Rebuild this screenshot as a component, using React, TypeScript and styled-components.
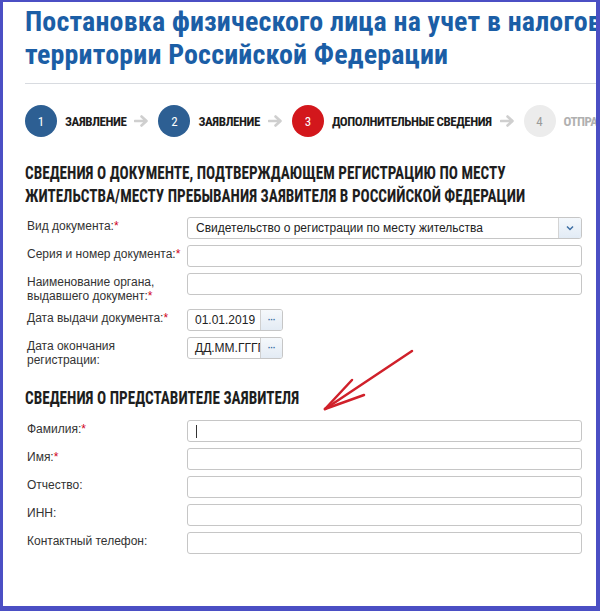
import styled, { createGlobalStyle } from "styled-components";

const GlobalStyle = createGlobalStyle`
  html, body {
    margin: 0;
    padding: 0;
    background: #ffffff;
  }
`;

const condensed = `"Roboto Condensed", "DejaVu Sans Condensed", sans-serif`;
const sans = `"Liberation Sans", Arial, sans-serif`;

const Frame = styled.div`
  position: relative;
  width: 600px;
  height: 611px;
  box-sizing: border-box;
  border-style: solid;
  border-color: #4b4fc4;
  border-width: 2px 4px 5px 3px;
  overflow: hidden;
  background: #fff;
`;

const Content = styled.div`
  width: 620px;
  padding: 3px 0 0 22px;
`;

const Title = styled.h1`
  margin: 0;
  font-family: ${condensed};
  font-weight: bold;
  font-size: 28px;
  line-height: 33px;
  letter-spacing: 0.15px;
  color: #1b5ea6;
  white-space: nowrap;
`;

const Divider = styled.div`
  height: 1px;
  background: #d8dbe0;
  margin-top: 12px;
`;

const Steps = styled.div`
  display: flex;
  align-items: center;
  height: 32px;
  margin-top: 21px;
  white-space: nowrap;
`;

const Step = styled.div`
  display: flex;
  align-items: center;
  gap: 8px;
`;

const Circle = styled.div<{ $kind: "done" | "active" | "next" }>`
  width: 32px;
  height: 32px;
  border-radius: 50%;
  display: flex;
  align-items: center;
  justify-content: center;
  font-family: ${condensed};
  font-size: 13px;
  color: ${(p) => (p.$kind === "next" ? "#9a9a9a" : "#fff")};
  background: ${(p) =>
    p.$kind === "done" ? "#2d5f93" : p.$kind === "active" ? "#d3171c" : "#ececec"};
`;

const StepLabel = styled.span<{ $muted?: boolean }>`
  font-family: ${condensed};
  font-weight: bold;
  font-size: 13px;
  letter-spacing: -0.45px;
  color: ${(p) => (p.$muted ? "#b0b0b0" : "#1c1c1c")};
`;

const StepArrow = styled.svg`
  margin: 0 9px 0 8px;
`;

const SectionTitle = styled.h2<{ $top: number }>`
  margin: ${(p) => p.$top}px 0 0 0;
  font-family: ${condensed};
  font-weight: bold;
  font-size: 19px;
  line-height: 23px;
  color: #1e1e1e;
  text-transform: uppercase;
  white-space: nowrap;
  transform: scaleX(0.8);
  transform-origin: left top;
`;

const Form = styled.div<{ $top: number }>`
  margin-top: ${(p) => p.$top}px;
  width: 557px;
  display: flex;
  flex-direction: column;
  gap: 6px;
`;

const Row = styled.div`
  display: grid;
  grid-template-columns: 162px 395px;
  align-items: start;
`;

const Label = styled.div`
  padding: 3px 0 0 2px;
  font-family: ${sans};
  font-size: 12px;
  line-height: 13.5px;
  color: #333;
`;

const Req = styled.span`
  color: #d0021b;
`;

const Input = styled.div`
  box-sizing: border-box;
  height: 22px;
  border: 1px solid #c6c6c6;
  border-radius: 3px;
  background: #fff;
  display: flex;
  align-items: center;
  padding-left: 8px;
  font-family: ${sans};
  font-size: 12px;
  color: #222;
`;

const Caret = styled.span`
  width: 1px;
  height: 13px;
  background: #333;
`;

const Select = styled(Input)`
  padding-right: 0;
  justify-content: space-between;
  overflow: hidden;
`;

const SelectBtn = styled.div`
  width: 22px;
  align-self: stretch;
  border-left: 1px solid #d4d4d4;
  background: linear-gradient(#f4f8fc, #e2ebf5);
  display: flex;
  align-items: center;
  justify-content: center;
`;

const DateBox = styled.div`
  display: flex;
  width: 96px;
  height: 22px;
  box-sizing: border-box;
  border: 1px solid #c6c6c6;
  border-radius: 3px;
  overflow: hidden;
`;

const DateText = styled.div`
  flex: 1;
  display: flex;
  align-items: center;
  padding-left: 7px;
  font-family: ${sans};
  font-size: 12px;
  color: #222;
  white-space: nowrap;
  overflow: hidden;
`;

const DateBtn = styled.div`
  width: 21px;
  border-left: 1px solid #d0d0d0;
  background: linear-gradient(#f5f8fb, #e3ebf4);
  color: #3a6ea5;
  font-family: ${sans};
  font-size: 9px;
  font-weight: bold;
  display: flex;
  align-items: center;
  justify-content: center;
  letter-spacing: -0.5px;
`;

const Annotation = styled.svg`
  position: absolute;
  left: -3px;
  top: -2px;
  pointer-events: none;
`;

function Arrow() {
  return (
    <StepArrow width="15" height="12" viewBox="0 0 15 12">
      <path
        d="M1 6 H12 M7.5 1.5 L12.5 6 L7.5 10.5"
        stroke="#cfcfcf"
        strokeWidth="2.6"
        fill="none"
        strokeLinecap="round"
        strokeLinejoin="round"
      />
    </StepArrow>
  );
}

function DateField({ value }: { value: string }) {
  return (
    <DateBox>
      <DateText>{value}</DateText>
      <DateBtn>···</DateBtn>
    </DateBox>
  );
}

export default function App() {
  return (
    <>
      <GlobalStyle />
      <Frame>
        <Content>
          <Title>
            Постановка физического лица на учет в налоговом органе на
            <br />
            территории Российской Федерации
          </Title>
          <Divider />
          <Steps>
            <Step>
              <Circle $kind="done">1</Circle>
              <StepLabel>ЗАЯВЛЕНИЕ</StepLabel>
            </Step>
            <Arrow />
            <Step>
              <Circle $kind="done">2</Circle>
              <StepLabel>ЗАЯВЛЕНИЕ</StepLabel>
            </Step>
            <Arrow />
            <Step>
              <Circle $kind="active">3</Circle>
              <StepLabel>ДОПОЛНИТЕЛЬНЫЕ СВЕДЕНИЯ</StepLabel>
            </Step>
            <Arrow />
            <Step>
              <Circle $kind="next">4</Circle>
              <StepLabel $muted>ОТПРАВКА</StepLabel>
            </Step>
          </Steps>

          <SectionTitle $top={24}>
            Сведения о документе, подтверждающем регистрацию по месту
            <br />
            жительства/месту пребывания заявителя в Российской Федерации
          </SectionTitle>

          <Form $top={10}>
            <Row>
              <Label>
                Вид документа:<Req>*</Req>
              </Label>
              <Select>
                <span>Свидетельство о регистрации по месту жительства</span>
                <SelectBtn>
                  <svg width="8" height="6" viewBox="0 0 8 6">
                    <path d="M1 1.5 L4 4.5 L7 1.5" stroke="#3d6ea3" strokeWidth="1.5" fill="none" />
                  </svg>
                </SelectBtn>
              </Select>
            </Row>
            <Row>
              <Label>
                Серия и номер документа:<Req>*</Req>
              </Label>
              <Input />
            </Row>
            <Row>
              <Label>
                Наименование органа,
                <br />
                выдавшего документ:<Req>*</Req>
              </Label>
              <Input />
            </Row>
            <Row>
              <Label>
                Дата выдачи документа:<Req>*</Req>
              </Label>
              <DateField value="01.01.2019" />
            </Row>
            <Row>
              <Label>
                Дата окончания
                <br />
                регистрации:
              </Label>
              <DateField value="ДД.ММ.ГГГГ" />
            </Row>
          </Form>

          <SectionTitle $top={19}>Сведения о представителе заявителя</SectionTitle>

          <Form $top={11}>
            <Row>
              <Label>
                Фамилия:<Req>*</Req>
              </Label>
              <Input>
                <Caret />
              </Input>
            </Row>
            <Row>
              <Label>
                Имя:<Req>*</Req>
              </Label>
              <Input />
            </Row>
            <Row>
              <Label>Отчество:</Label>
              <Input />
            </Row>
            <Row>
              <Label>ИНН:</Label>
              <Input />
            </Row>
            <Row>
              <Label>Контактный телефон:</Label>
              <Input />
            </Row>
          </Form>
        </Content>

        <Annotation width="600" height="611" viewBox="0 0 600 611">
          <g stroke="#d0202a" strokeWidth="2.5" fill="none" strokeLinecap="round">
            <path d="M412 351 L325 409" />
            <path d="M325 409 L352 380" />
            <path d="M325 409 L364 395" />
          </g>
        </Annotation>
      </Frame>
    </>
  );
}
